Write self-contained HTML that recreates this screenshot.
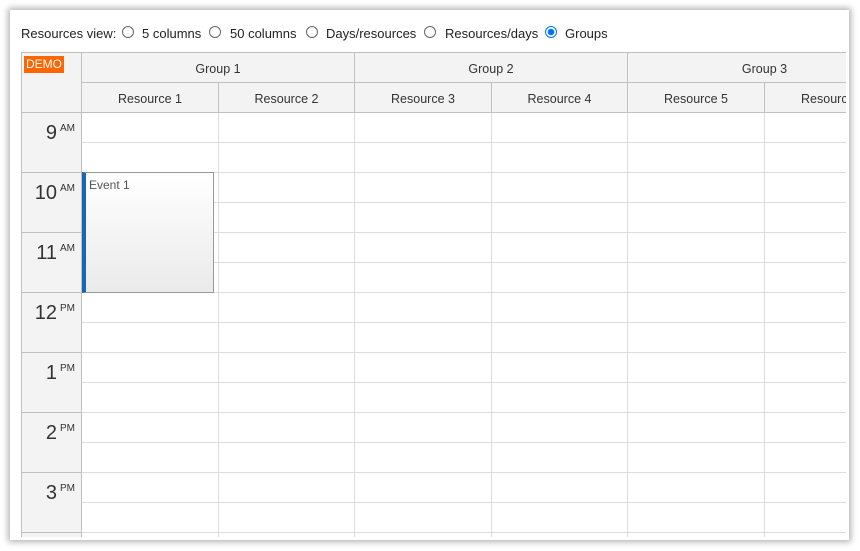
<!DOCTYPE html><html><head><style>
html,body{margin:0;width:860px;height:551px;overflow:hidden}
body{background:#fff;font-family:"Liberation Sans",sans-serif;position:relative}
.card{position:absolute;left:10px;top:10px;width:839px;height:530px;background:#fff;box-shadow:0 0 6px 2px rgba(0,0,0,.3)}
.tb{position:absolute;top:26px;font-size:13px;color:#222;white-space:nowrap;line-height:15px}
.r{position:absolute;top:26px;width:12px;height:12px;border:1px solid #666;border-radius:50%;box-sizing:border-box}
.on{border:1px solid #0075ff;background:radial-gradient(#0075ff 0 3px,#fff 3.5px)}
.grid{position:absolute;left:21px;top:52px;width:824px;height:484px;overflow:hidden;border-left:1px solid #c0c0c0;border-top:1px solid #c0c0c0}
.a{position:absolute;box-sizing:border-box}
.h{background:#f3f3f3;border-right:1px solid #c0c0c0;border-bottom:1px solid #c0c0c0;font-size:12.5px;color:#333;text-align:center}
.c{border-right:1px solid #ddd;border-bottom:1px solid #ddd}
.t{background:#f3f3f3;border-right:1px solid #c0c0c0;border-bottom:1px solid #c0c0c0;text-align:right;padding-right:6px;color:#333;font-size:20px}
.t sup{font-size:10px;vertical-align:8px;margin-left:3px}
</style></head><body>
<div class="card"></div>
<div class="tb" style="left:21px">Resources view:</div>
<div class="r" style="left:122px"></div><div class="tb" style="left:142px">5 columns</div>
<div class="r" style="left:209px"></div><div class="tb" style="left:230px">50 columns</div>
<div class="r" style="left:306px"></div><div class="tb" style="left:326px">Days/resources</div>
<div class="r" style="left:424px"></div><div class="tb" style="left:445px">Resources/days</div>
<div class="r on" style="left:545px"></div><div class="tb" style="left:565px">Groups</div>
<div class="grid" id="g">
<div class="a h" style="left:0;top:0;width:60px;height:60px"></div>
<div class="a" style="left:2px;top:3px;background:#f60;color:#fff;font-size:12px;padding:1px 2px;line-height:15px">DEMO</div>
</div>
<script>
var g=document.getElementById('g'),h='';
var xs=[60,197,333,470,606,743,880];
for(var i=0;i<3;i++)h+='<div class="a h" style="left:'+xs[i*2]+'px;top:0;width:'+(xs[i*2+2]-xs[i*2])+'px;height:30px;line-height:32px">Group '+(i+1)+'</div>';
for(var i=0;i<6;i++){h+='<div class="a h" style="left:'+xs[i]+'px;top:30px;width:'+(xs[i+1]-xs[i])+'px;height:30px;line-height:32px">Resource '+(i+1)+'</div>';
for(var r=0;r<15;r++)h+='<div class="a c" style="left:'+xs[i]+'px;top:'+(60+r*30)+'px;width:'+(xs[i+1]-xs[i])+'px;height:30px"></div>';}
var L=['9|AM','10|AM','11|AM','12|PM','1|PM','2|PM','3|PM','4|PM'];
for(var k=0;k<8;k++){var p=L[k].split('|');h+='<div class="a t" style="left:0;top:'+(60+k*60)+'px;width:60px;height:60px;padding-top:9px">'+p[0]+'<sup>'+p[1]+'</sup></div>';}
h+='<div class="a" style="left:60px;top:119px;width:132px;height:121px;border:1px solid #999;border-left:4px solid #1a66b0;background:linear-gradient(#fff,#eaeaea);font-size:12px;color:#555;padding:5px 3px">Event 1</div>';
g.insertAdjacentHTML('beforeend',h);
</script>
</body></html>
